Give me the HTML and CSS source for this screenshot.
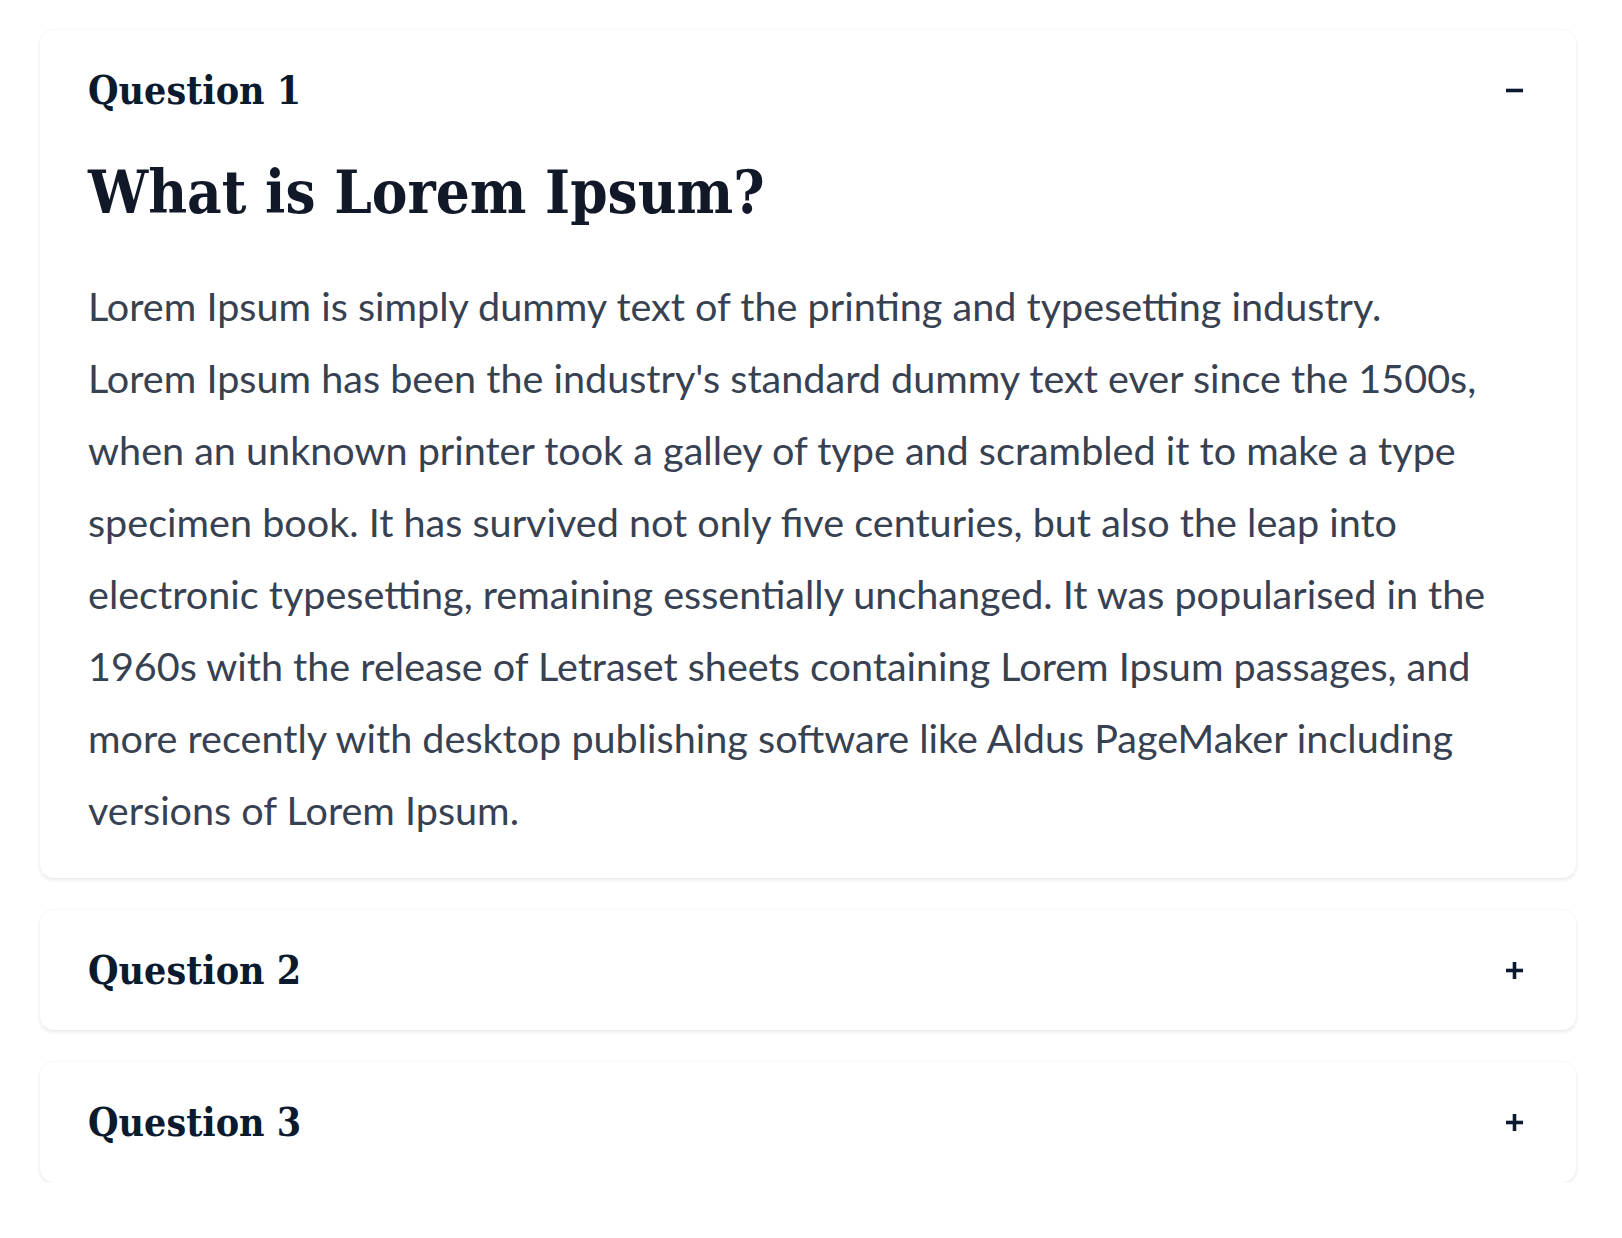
FILE: index.html
```html
<!DOCTYPE html>
<html lang="en">
<head>
<meta charset="utf-8">
<title>FAQ</title>
<link rel="stylesheet" href="styles.css">
</head>
<body>
<main class="faq">
  <section class="card open">
    <div class="card-header">
      <h3 class="question">Question 1</h3>
      <svg class="toggle" width="19" height="19" viewBox="0 0 19 19"><line x1="1" y1="9.5" x2="18" y2="9.5" /></svg>
    </div>
    <div class="card-body">
      <h2 class="answer-title">What is Lorem Ipsum?</h2>
      <p class="answer-text">Lorem Ipsum is simply dummy text of the printing and typesetting industry. Lorem Ipsum has been the industry's standard dummy text ever since the 1500s, when an unknown printer took a galley of type and scrambled it to make a type specimen book. It has survived not only five centuries, but also the leap into electronic typesetting, remaining essentially unchanged. It was popularised in the 1960s with the release of Letraset sheets containing Lorem Ipsum passages, and more recently with desktop publishing software like Aldus PageMaker including versions of Lorem Ipsum.</p>
    </div>
  </section>
  <section class="card">
    <div class="card-header">
      <h3 class="question">Question 2</h3>
      <svg class="toggle" width="19" height="19" viewBox="0 0 19 19"><line x1="1" y1="9.5" x2="18" y2="9.5" /><line x1="9.5" y1="1" x2="9.5" y2="18" /></svg>
    </div>
  </section>
  <section class="card">
    <div class="card-header">
      <h3 class="question">Question 3</h3>
      <svg class="toggle" width="19" height="19" viewBox="0 0 19 19"><line x1="1" y1="9.5" x2="18" y2="9.5" /><line x1="9.5" y1="1" x2="9.5" y2="18" /></svg>
    </div>
  </section>
</main>
</body>
</html>
```
FILE: styles.css
```css
html, body {
  margin: 0;
  padding: 0;
  background: #ffffff;
}

.faq {
  width: 1536px;
  padding: 30px 0 0 40px;
  display: flex;
  flex-direction: column;
  gap: 32px;
}

.card {
  background: #ffffff;
  border-radius: 14px;
  box-shadow: 0 2px 4px rgba(15, 23, 42, 0.09), 0 0 2px rgba(15, 23, 42, 0.05);
  padding: 24px 48px;
}

.card.open {
  padding-bottom: 32px;
}

.card-header {
  display: flex;
  align-items: center;
  justify-content: space-between;
  height: 72px;
}

.question {
  margin: 0;
  font-family: "DejaVu Serif", "Liberation Serif", serif;
  font-stretch: condensed;
  font-weight: 700;
  font-size: 39px;
  line-height: 72px;
  color: #0b1a2f;
}

.toggle {
  margin-right: 4px;
  stroke: #0b1a2f;
  stroke-width: 3.6;
  fill: none;
}

.card-body {
  padding-top: 31px;
}

.answer-title {
  margin: 0;
  font-family: "DejaVu Serif", "Liberation Serif", serif;
  font-stretch: condensed;
  font-weight: 700;
  font-size: 59.5px;
  line-height: 70px;
  color: #111827;
}

.answer-text {
  margin: 43px 0 0;
  max-width: 1408px;
  font-family: Lato, "Noto Sans", sans-serif;
  font-size: 39.55px;
  line-height: 72px;
  color: #374151;
}
```
